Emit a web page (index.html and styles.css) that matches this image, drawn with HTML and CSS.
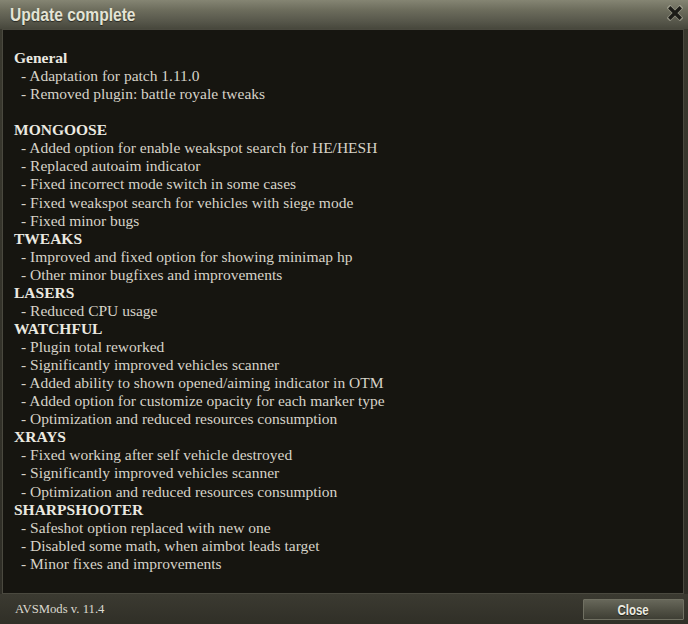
FILE: index.html
```html
<!DOCTYPE html>
<html>
<head>
<meta charset="utf-8">
<link rel="stylesheet" href="styles.css">
</head>
<body>
<div class="window">
  <div class="titlebar">
    <span class="title">Update complete</span>
    <span class="close-x">
      <svg width="16" height="16" viewBox="0 0 16 16">
        <path d="M3 3 L13 13 M13 3 L3 13" stroke="#b9b8a8" stroke-width="5" stroke-linecap="square" opacity="0.55"/>
        <path d="M3.5 3.5 L12.5 12.5 M12.5 3.5 L3.5 12.5" stroke="#1c1c17" stroke-width="3.4" stroke-linecap="square"/>
      </svg>
    </span>
  </div>
  <div class="panel">
    <div class="h">General</div>
    <div class="i">- Adaptation for patch 1.11.0</div>
    <div class="i">- Removed plugin: battle royale tweaks</div>
    <div class="i">&nbsp;</div>
    <div class="h">MONGOOSE</div>
    <div class="i">- Added option for enable weakspot search for HE/HESH</div>
    <div class="i">- Replaced autoaim indicator</div>
    <div class="i">- Fixed incorrect mode switch in some cases</div>
    <div class="i">- Fixed weakspot search for vehicles with siege mode</div>
    <div class="i">- Fixed minor bugs</div>
    <div class="h">TWEAKS</div>
    <div class="i">- Improved and fixed option for showing minimap hp</div>
    <div class="i">- Other minor bugfixes and improvements</div>
    <div class="h">LASERS</div>
    <div class="i">- Reduced CPU usage</div>
    <div class="h">WATCHFUL</div>
    <div class="i">- Plugin total reworked</div>
    <div class="i">- Significantly improved vehicles scanner</div>
    <div class="i">- Added ability to shown opened/aiming indicator in OTM</div>
    <div class="i">- Added option for customize opacity for each marker type</div>
    <div class="i">- Optimization and reduced resources consumption</div>
    <div class="h">XRAYS</div>
    <div class="i">- Fixed working after self vehicle destroyed</div>
    <div class="i">- Significantly improved vehicles scanner</div>
    <div class="i">- Optimization and reduced resources consumption</div>
    <div class="h">SHARPSHOOTER</div>
    <div class="i">- Safeshot option replaced with new one</div>
    <div class="i">- Disabled some math, when aimbot leads target</div>
    <div class="i">- Minor fixes and improvements</div>
  </div>
  <div class="footer">
    <span class="version">AVSMods v. 11.4</span>
    <button class="btn"><span class="btn-label">Close</span></button>
  </div>
</div>
</body>
</html>
```
FILE: styles.css
```css
html, body {
  margin: 0;
  padding: 0;
  background: #2c2b24;
}
.window {
  width: 688px;
  height: 624px;
  display: flex;
  flex-direction: column;
  background: linear-gradient(180deg, #3a392f 0%, #2e2d26 100%);
}
.titlebar {
  height: 29px;
  flex: none;
  display: flex;
  align-items: center;
  justify-content: space-between;
  padding: 0 5px 0 10px;
  background: linear-gradient(180deg, #858573 0%, #6c6c5c 35%, #56564a 75%, #47473c 100%);
}
.title {
  display: inline-block;
  font-family: "Liberation Sans", sans-serif;
  font-weight: bold;
  font-size: 19px;
  color: #e4e4d6;
  text-shadow: 0 1px 1px rgba(0,0,0,0.5);
  margin-top: 1px;
  transform: scaleX(0.82);
  transform-origin: left center;
}
.close-x {
  display: flex;
  width: 16px;
  height: 16px;
  margin-top: -3px;
}
.panel {
  flex: 1;
  margin: 0 4px 0 2px;
  border: 1px solid #4a493f;
  background: #161510;
  padding: 19px 10px 0 11px;
  font-family: "Liberation Serif", serif;
  font-size: 15.5px;
  line-height: 18.07px;
  color: #d6d3c8;
}
.h {
  font-weight: bold;
  color: #ebe9e0;
}
.i {
  padding-left: 7px;
  white-space: pre;
}
.footer {
  height: 30px;
  flex: none;
  display: flex;
  align-items: center;
  justify-content: space-between;
  padding: 0 4px 0 15px;
  background: linear-gradient(180deg, #3b3a31 0%, #302f27 100%);
}
.version {
  font-family: "Liberation Serif", serif;
  font-size: 12.7px;
  color: #dcdad0;
}
.btn {
  width: 101px;
  height: 21px;
  margin-top: 1px;
  border: 1px solid #707062;
  border-radius: 1px;
  background: linear-gradient(180deg, #67675a 0%, #525246 50%, #3e3e34 100%);
  padding: 0;
  display: flex;
  align-items: center;
  justify-content: center;
}
.btn-label {
  display: inline-block;
  font-family: "Liberation Sans", sans-serif;
  font-weight: bold;
  font-size: 14px;
  color: #ecebe0;
  text-shadow: 0 1px 1px rgba(0,0,0,0.6);
  transform: scaleX(0.82);
}
```
